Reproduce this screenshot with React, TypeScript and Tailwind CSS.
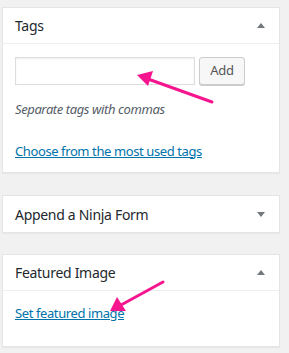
const font = { fontFamily: '"Noto Sans", "Open Sans", sans-serif' };

function Caret({ up }: { up: boolean }) {
  return (
    <svg width="8" height="5" viewBox="0 0 8 5" className="shrink-0">
      {up ? <polygon points="0,5 8,5 4,0" fill="#72777c" /> : <polygon points="0,0 8,0 4,5" fill="#72777c" />}
    </svg>
  );
}

function PanelHeader({ title, up, border }: { title: string; up: boolean; border?: boolean }) {
  return (
    <div className={`flex h-[36px] items-center justify-between pl-3 pr-[14px] ${border ? 'border-b border-[#eeeeee]' : ''}`}>
      <h2 className="text-[14px] tracking-[-0.3px] text-[#23282d]">{title}</h2>
      <Caret up={up} />
    </div>
  );
}

export default function App() {
  return (
    <div className="relative h-[353px] w-[289px] overflow-hidden bg-[#f1f1f1] pl-[2px] pr-[9px] pt-[7px]" style={font}>
      {/* Tags */}
      <div className="border border-[#e5e5e5] bg-white shadow-[0_1px_1px_rgba(0,0,0,0.04)]">
        <PanelHeader title="Tags" up border />
        <div className="px-3 pb-[11px] pt-[13px]">
          <div className="flex gap-[4px]">
            <div className="h-[28px] w-[180px] border border-[#dddddd] bg-white shadow-[inset_0_1px_2px_rgba(0,0,0,0.07)]" />
            <button className="h-[28px] w-[46px] rounded-[3px] border border-[#cccccc] bg-[#f7f7f7] text-[13px] tracking-[-0.2px] text-[#555555] shadow-[0_1px_0_#cccccc]">
              Add
            </button>
          </div>
          <p className="mt-[15px] text-[13px] italic tracking-[-0.4px] text-[#555d66]">Separate tags with commas</p>
          <a className="mt-[22px] block text-[13px] tracking-[-0.4px] text-[#0073aa] underline">Choose from the most used tags</a>
        </div>
      </div>

      {/* Ninja form */}
      <div className="mt-[22px] border border-[#e5e5e5] bg-white shadow-[0_1px_1px_rgba(0,0,0,0.04)]">
        <PanelHeader title="Append a Ninja Form" up={false} />
      </div>

      {/* Featured image */}
      <div className="mt-[21px] border border-[#e5e5e5] bg-white shadow-[0_1px_1px_rgba(0,0,0,0.04)]">
        <PanelHeader title="Featured Image" up border />
        <div className="h-[55px] px-3 pt-[9px]">
          <a className="text-[13px] tracking-[-0.4px] text-[#0073aa] underline">Set featured image</a>
        </div>
      </div>

      {/* annotation arrows */}
      <svg className="pointer-events-none absolute left-0 top-0" width="289" height="353">
        <line x1="212" y1="102" x2="148" y2="79" stroke="#f5168f" strokeWidth="3" strokeLinecap="round" />
        <polygon points="137,75 153,71 148,86" fill="#f5168f" />
        <line x1="163" y1="282" x2="121" y2="305" stroke="#f5168f" strokeWidth="3" strokeLinecap="round" />
        <polygon points="110,311 117,297 126,311" fill="#f5168f" />
      </svg>
    </div>
  );
}
